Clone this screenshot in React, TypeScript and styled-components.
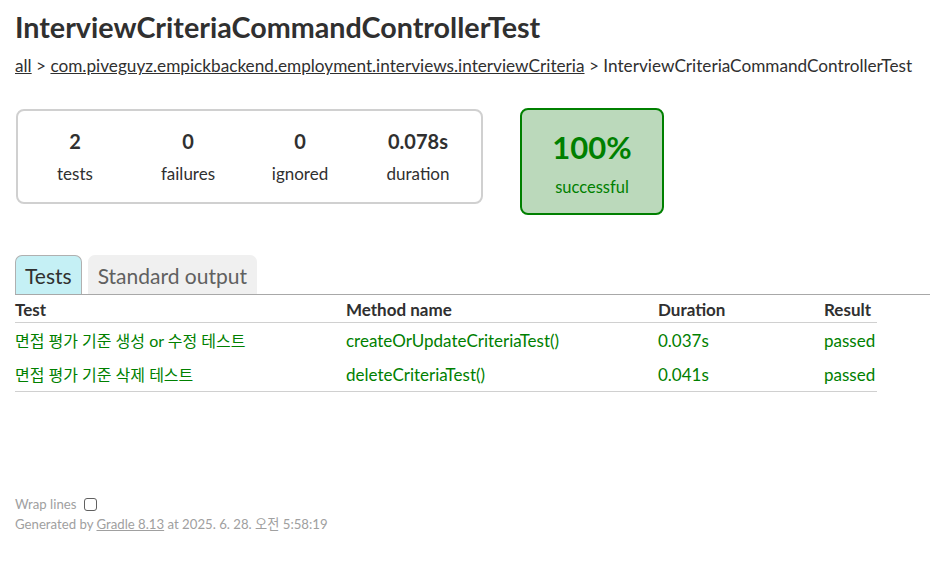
import React from 'react';
import styled, { createGlobalStyle } from 'styled-components';

const GlobalStyle = createGlobalStyle`
  body {
    margin: 0;
    padding: 0;
    background: #ffffff;
    font-family: Lato, "Noto Sans CJK KR", sans-serif;
    color: #303030;
  }
`;

const green = '#008000';

const Content = styled.div`
  padding: 12px 15px 20px 15px;
`;

const Title = styled.h1`
  margin: 0;
  font-size: 28.7px;
  font-weight: 700;
  line-height: 30px;
  white-space: nowrap;
  color: #303030;
`;

const Breadcrumb = styled.div`
  margin-top: 14px;
  font-size: 17.2px;
  line-height: 20px;
  white-space: nowrap;

  a {
    color: #303030;
    text-decoration: underline;
  }
`;

const SummaryRow = styled.div`
  display: flex;
  align-items: flex-start;
  gap: 37px;
  margin-top: 32px;
`;

const SummaryBox = styled.div`
  display: flex;
  box-sizing: border-box;
  width: 467px;
  height: 95px;
  margin-top: 1px;
  margin-left: 1px;
  padding: 16px 0 0 0;
  border: 2px solid #d0d0d0;
  border-radius: 8px;
`;

const Counter = styled.div<{ $width: number }>`
  width: ${(p) => p.$width}px;
  text-align: center;
`;

const CounterValue = styled.div`
  font-size: 20px;
  font-weight: 700;
  line-height: 28px;
`;

const CounterLabel = styled.div`
  margin-top: 8px;
  font-size: 17px;
  line-height: 22px;
`;

const SuccessBox = styled.div`
  box-sizing: border-box;
  width: 144px;
  height: 107px;
  padding-top: 19px;
  border: 2px solid ${green};
  border-radius: 8px;
  background: #bbd9bb;
  color: ${green};
  text-align: center;
`;

const Percent = styled.div`
  font-size: 31px;
  font-weight: 700;
  line-height: 36px;
`;

const PercentLabel = styled.div`
  margin-top: 11px;
  font-size: 16.5px;
  line-height: 22px;
`;

const TabBar = styled.ul`
  display: flex;
  gap: 6px;
  margin: 40px -15px 0 0;
  padding: 0;
  list-style: none;
  border-bottom: 1px solid #a8a8a8;
`;

const Tab = styled.li<{ $selected?: boolean }>`
  box-sizing: border-box;
  height: 39px;
  padding: 6px 9px 0 9px;
  border: 1px solid ${(p) => (p.$selected ? '#b0b0b0' : '#f0f0f0')};
  border-bottom: none;
  border-radius: 7px 7px 0 0;
  background: ${(p) => (p.$selected ? '#c5f0f5' : '#f0f0f0')};
  color: ${(p) => (p.$selected ? '#303030' : '#606060')};
  font-size: 21px;
  line-height: 27px;
`;

const Table = styled.table`
  width: 862px;
  border-collapse: collapse;
  font-size: 17px;
`;

const Th = styled.th<{ $width?: number }>`
  width: ${(p) => (p.$width ? `${p.$width}px` : 'auto')};
  padding: 5px 0 2px 0;
  text-align: left;
  font-weight: 700;
  line-height: 20px;
  border-bottom: 1px solid #d0d0d0;
`;

const Td = styled.td<{ $small?: boolean }>`
  padding: 8px 0 6px 0;
  color: ${green};
  font-size: ${(p) => (p.$small ? '16px' : '17px')};
  line-height: 20px;
  white-space: nowrap;
`;

const Row = styled.tr<{ $last?: boolean }>`
  border-bottom: ${(p) => (p.$last ? '1px solid #d0d0d0' : 'none')};
`;

const Footer = styled.div`
  margin-top: 102px;
  font-size: 13.2px;
  line-height: 20px;
  color: #a0a0a0;
  white-space: nowrap;

  a {
    color: #a0a0a0;
  }
`;

const WrapToggle = styled.label`
  display: flex;
  align-items: center;
  gap: 8px;
`;

const CheckBox = styled.span`
  display: inline-block;
  box-sizing: border-box;
  width: 13px;
  height: 13px;
  border: 1px solid #606060;
  border-radius: 3px;
`;

const counters = [
  { value: '2', label: 'tests', width: 114 },
  { value: '0', label: 'failures', width: 112 },
  { value: '0', label: 'ignored', width: 112 },
  { value: '0.078s', label: 'duration', width: 124 },
];

const tests = [
  { name: '면접 평가 기준 생성 or 수정 테스트', method: 'createOrUpdateCriteriaTest()', duration: '0.037s' },
  { name: '면접 평가 기준 삭제 테스트', method: 'deleteCriteriaTest()', duration: '0.041s' },
];

export default function App() {
  return (
    <>
      <GlobalStyle />
      <Content>
        <Title>InterviewCriteriaCommandControllerTest</Title>
        <Breadcrumb>
          <a href="#">all</a> &gt;{' '}
          <a href="#">com.piveguyz.empickbackend.employment.interviews.interviewCriteria</a> &gt;{' '}
          InterviewCriteriaCommandControllerTest
        </Breadcrumb>

        <SummaryRow>
          <SummaryBox>
            {counters.map((c) => (
              <Counter key={c.label} $width={c.width}>
                <CounterValue>{c.value}</CounterValue>
                <CounterLabel>{c.label}</CounterLabel>
              </Counter>
            ))}
          </SummaryBox>
          <SuccessBox>
            <Percent>100%</Percent>
            <PercentLabel>successful</PercentLabel>
          </SuccessBox>
        </SummaryRow>

        <TabBar>
          <Tab $selected>Tests</Tab>
          <Tab>Standard output</Tab>
        </TabBar>

        <Table>
          <thead>
            <tr>
              <Th $width={331}>Test</Th>
              <Th $width={312}>Method name</Th>
              <Th $width={166}>Duration</Th>
              <Th>Result</Th>
            </tr>
          </thead>
          <tbody>
            {tests.map((t, i) => (
              <Row key={t.method} $last={i === tests.length - 1}>
                <Td $small>{t.name}</Td>
                <Td>{t.method}</Td>
                <Td>{t.duration}</Td>
                <Td>passed</Td>
              </Row>
            ))}
          </tbody>
        </Table>

        <Footer>
          <WrapToggle>
            Wrap lines <CheckBox />
          </WrapToggle>
          <div>
            Generated by <a href="#">Gradle 8.13</a> at 2025. 6. 28. 오전 5:58:19
          </div>
        </Footer>
      </Content>
    </>
  );
}
